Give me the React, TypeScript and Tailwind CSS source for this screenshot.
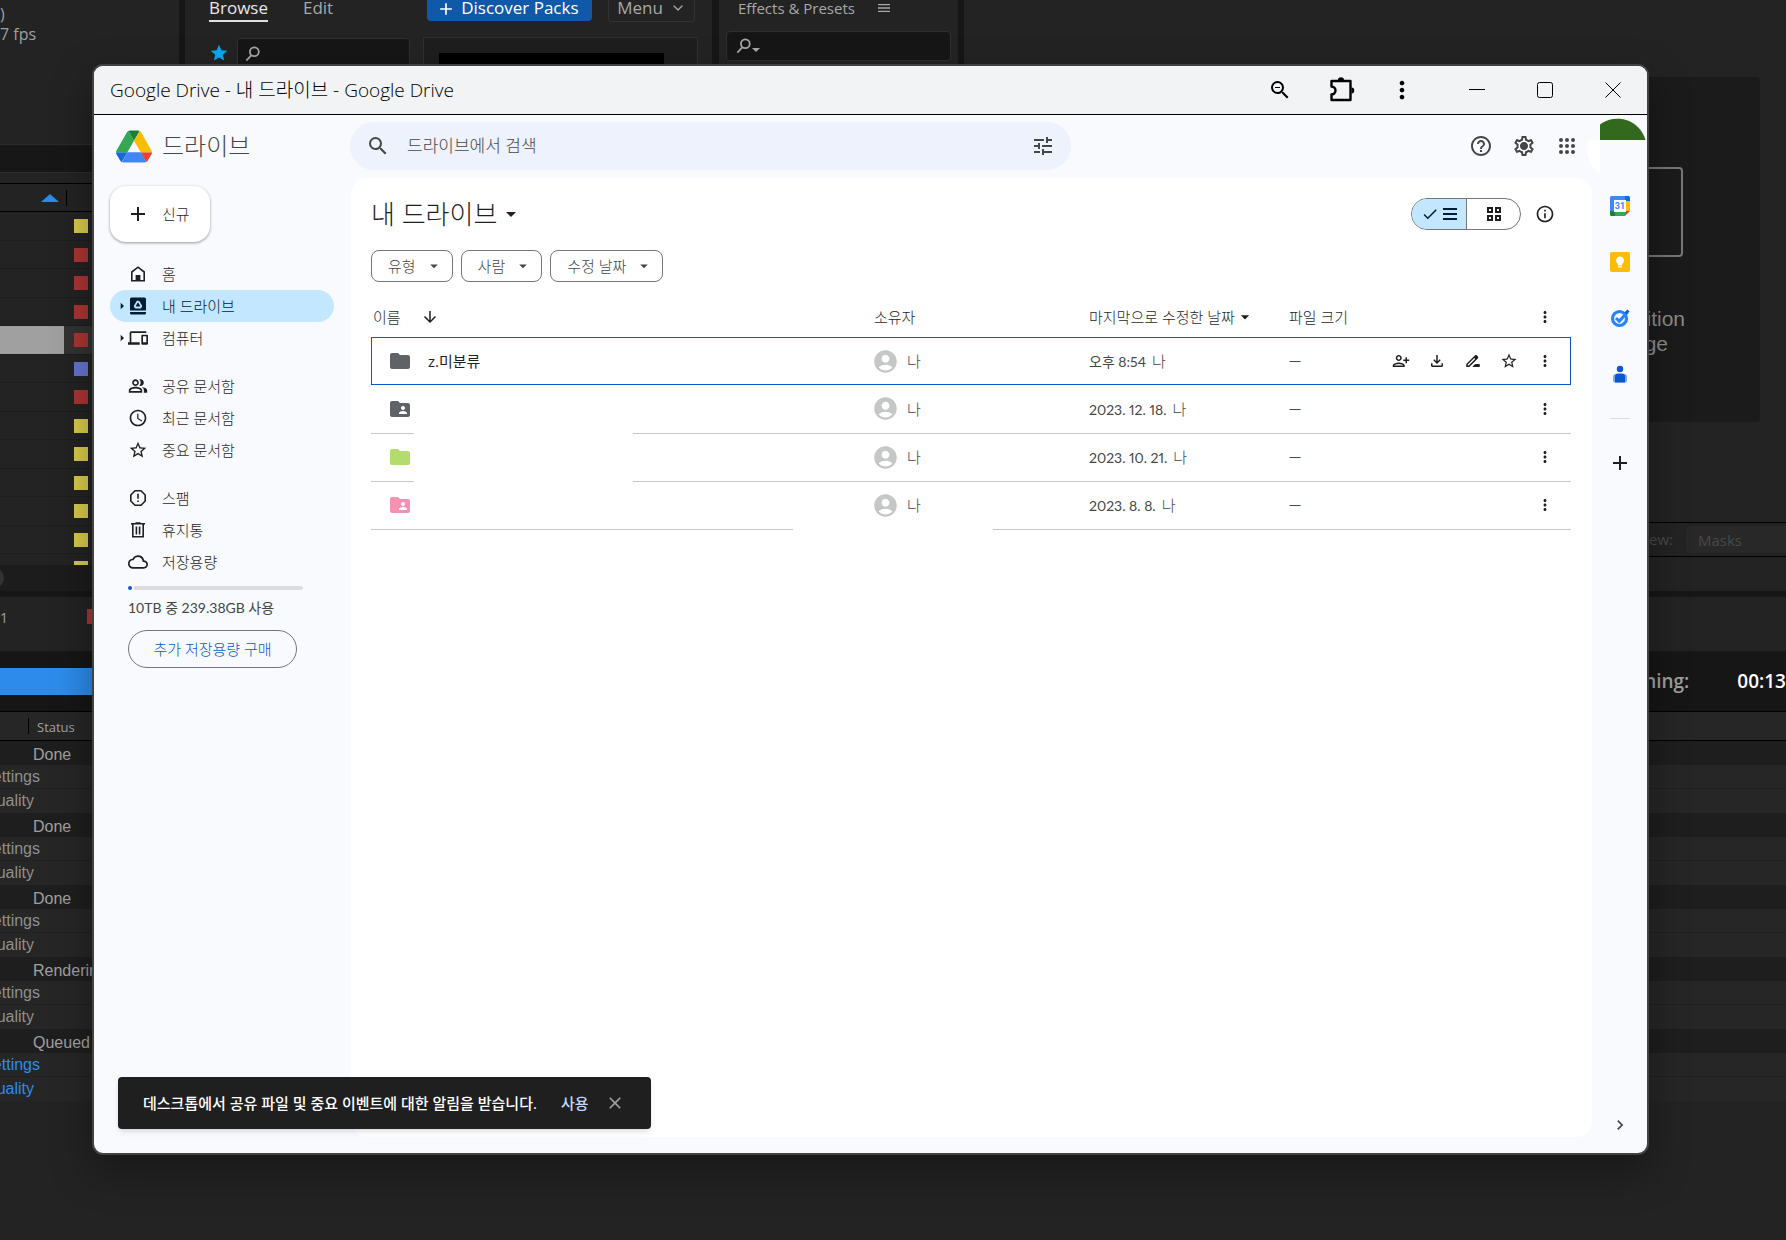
import React, {useState} from 'react';
import {
    MdAccountCircle,
    MdAdd,
    MdAccessTime,
    MdArrowDownward,
    MdArrowDropDown,
    MdArrowRight,
    MdCheck,
    MdChevronRight,
    MdClose,
    MdDriveFileRenameOutline,
    MdFolder,
    MdFolderShared,
    MdHelpOutline,
    MdMenu,
    MdMoreVert,
    MdOutlineCloud,
    MdOutlineDevices,
    MdOutlineFileDownload,
    MdOutlineInfo,
    MdOutlinePeopleAlt,
    MdOutlineSettings,
    MdPersonAddAlt,
    MdSearch,
    MdStar,
    MdStarOutline,
    MdTune,
    MdZoomOut,
} from 'react-icons/md';
import {LuChevronDown} from 'react-icons/lu';

type IconProps = {className?: string};

const HomeIcon = ({className}: IconProps) => (
    <svg viewBox="0 0 20 20" className={className} fill="none" stroke="currentColor" strokeWidth="1.6">
        <path d="M3.8 16.7V8L10 3.2 16.2 8v8.7z"/>
        <path d="M7.6 17v-6h4.8v6z" fill="currentColor" stroke="none"/>
    </svg>
);

const MyDriveIcon = ({className}: IconProps) => (
    <svg viewBox="0 0 20 20" className={className}>
        <path fill="currentColor" d="M3.5 1.5h13A1.5 1.5 0 0 1 18 3v11.500H2V3a1.5 1.5 0 0 1 1.5-1.5zM2 16h16v1a1.5 1.5 0 0 1-1.5 1.5h-13A1.5 1.5 0 0 1 2 17z"/>
        <path fill="none" stroke="#c2e7ff" strokeWidth="1.8" strokeLinejoin="round" d="M9.300 5.600h1.400l2.600 4.500-.8 1.400h-5l-.8-1.400z"/>
    </svg>
);

const SpamIcon = ({className}: IconProps) => (
    <svg viewBox="0 0 20 20" className={className} fill="none" stroke="currentColor" strokeWidth="1.6" strokeLinejoin="round">
        <path d="M7 2.800h6L17.200 7v6L13 17.200H7L2.800 13V7z"/>
        <path d="M10 5.800v5M10 12.400v1.700"/>
    </svg>
);

const TrashIcon = ({className}: IconProps) => (
    <svg viewBox="0 0 20 20" className={className} fill="none" stroke="currentColor" strokeWidth="1.6">
        <path d="M3 3.800h14M7.500 3h5M4.800 4v12.800h10.400V4M8.400 6.500v8M11.600 6.500v8"/>
    </svg>
);

const AppsIcon = ({className}: IconProps) => (
    <svg viewBox="0 0 24 24" className={className} fill="currentColor">
        {[6, 12, 18].map((y) => [6, 12, 18].map((x) => <circle key={`${x}-${y}`} cx={x} cy={y} r="2"/>))}
    </svg>
);

const SettingsIcon = ({className}: IconProps) => (
    <svg viewBox="0 0 24 24" className={className} fill="currentColor">
        <MdOutlineSettings size={24}/>
        <circle cx="12" cy="12" r="3.500"/>
    </svg>
);

const PuzzleIcon = ({className}: IconProps) => (
    <svg viewBox="0 0 28 28" className={className} fill="none" stroke="currentColor" strokeWidth="2.400" strokeLinejoin="round">
        <path d="M3.500 5h19v19h-19v-5.500a4 4 0 0 0 0-8z"/>
        <path d="M10 4a3 2.800 0 0 1 6 0zM23.500 11.500a2.800 3 0 0 1 0 6z" fill="currentColor" stroke="none"/>
    </svg>
);

const ListIcon = () => (
    <svg viewBox="0 0 14 14" className="size-[14px]" stroke="currentColor" strokeWidth="2">
        <path d="M0 2h14M0 7h14M0 12h14"/>
    </svg>
);

const GridIcon = () => (
    <svg viewBox="0 0 14 14" className="size-[14px]" fill="none" stroke="currentColor" strokeWidth="2">
        <path d="M1 1h4v4H1zM9 1h4v4H9zM1 9h4v4H1zM9 9h4v4H9z"/>
    </svg>
);

const DriveLogo = ({className}: IconProps) => (
    <svg viewBox="0 0 87.3 78" className={className}>
        <path d="m6.6 66.85 3.85 6.65c.8 1.4 1.95 2.5 3.3 3.3l13.75-23.8h-27.5c0 1.55.4 3.1 1.2 4.5z" fill="#1967d2"/>
        <path d="m43.65 25-13.75-23.8c-1.35.8-2.5 1.9-3.3 3.3l-25.4 44a9.06 9.06 0 0 0 -1.2 4.5h27.5z" fill="#34a853"/>
        <path d="m73.55 76.8c1.35-.8 2.5-1.9 3.3-3.3l1.6-2.75 7.65-13.25c.8-1.4 1.2-2.95 1.2-4.5h-27.502l5.852 11.5z" fill="#ea4335"/>
        <path d="m43.65 25 13.75-23.8c-1.35-.8-2.9-1.2-4.5-1.2h-18.5c-1.6 0-3.15.45-4.5 1.2z" fill="#188038"/>
        <path d="m59.8 53h-32.3l-13.75 23.8c1.35.8 2.9 1.2 4.5 1.2h50.8c1.6 0 3.15-.45 4.5-1.2z" fill="#4285f4"/>
        <path d="m73.4 26.5-12.7-22c-.8-1.4-1.95-2.5-3.3-3.3l-13.75 23.8 16.15 28h27.45c0-1.55-.4-3.1-1.2-4.5z" fill="#fbbc04"/>
    </svg>
);

const CalendarLogo = () => (
    <svg viewBox="0 0 20 20" className="size-5">
        <path fill="#4285f4" d="M1.5 0H15v5H5v10H0V1.500A1.500 1.500 0 0 1 1.500 0z"/>
        <path fill="#1967d2" d="M15 0h3.500A1.500 1.500 0 0 1 20 1.500V5h-5z"/>
        <path fill="#fbbc04" d="M15 5h5v10h-5z"/>
        <path fill="#34a853" d="M5 15h10v5H5z"/>
        <path fill="#188038" d="M0 15h5v5H1.500A1.500 1.500 0 0 1 0 18.500z"/>
        <path fill="#ea4335" d="M15 15h5l-5 5z"/>
        <path fill="#fff" d="M4 4h12v12H4z"/>
        <text x="10" y="13" textAnchor="middle" fontSize="9" fontWeight="700" fontFamily="Roboto" fill="#4285f4">31</text>
    </svg>
);

const KeepLogo = () => (
    <svg viewBox="0 0 20 20" className="size-5">
        <rect width="20" height="20" rx="2" fill="#fbbc04"/>
        <path fill="#fff" d="M10 4.500a4 4 0 0 0-2.200 7.300V13.500h4.400v-1.700A4 4 0 0 0 10 4.500zM8 14.300h4v1.300H8z"/>
    </svg>
);

const TasksLogo = () => (
    <svg viewBox="0 0 20 20" className="size-5" fill="none">
        <circle cx="9.500" cy="10.500" r="7" stroke="#2684fc" strokeWidth="3.200"/>
        <path d="M6 10l3.200 3.200L17.500 4" stroke="#2684fc" strokeWidth="3"/>
        <path d="M15.500 5.500l3-3" stroke="#0066da" strokeWidth="3"/>
    </svg>
);

const ContactsLogo = () => (
    <svg viewBox="0 0 20 20" className="size-5">
        <circle cx="10" cy="5" r="3.200" fill="#0b57d0"/>
        <path fill="#7baaf7" d="M6 10h8a3 3 0 0 1 3 3v3.500a2 2 0 0 1-2 2H5a2 2 0 0 1-2-2V13a3 3 0 0 1 3-3z"/>
        <path fill="#0b57d0" d="M8 9.500h4a3 3 0 0 1 3 3v6H5v-6a3 3 0 0 1 3-3z"/>
    </svg>
);

const MagnifierIcon = ({className}: IconProps) => (
    <svg viewBox="0 0 18 18" className={className} fill="none" stroke="currentColor" strokeWidth="2">
        <circle cx="10.500" cy="6.500" r="5"/>
        <path d="M7 10.500L1.500 16.500"/>
    </svg>
);

const navGroups = [
    [
        {label: '홈', icon: HomeIcon},
        {label: '내 드라이브', icon: MyDriveIcon, expandable: true},
        {label: '컴퓨터', icon: MdOutlineDevices, expandable: true},
    ],
    [
        {label: '공유 문서함', icon: MdOutlinePeopleAlt},
        {label: '최근 문서함', icon: MdAccessTime},
        {label: '중요 문서함', icon: MdStarOutline},
    ],
    [
        {label: '스팸', icon: SpamIcon},
        {label: '휴지통', icon: TrashIcon},
        {label: '저장용량', icon: MdOutlineCloud},
    ],
];

const files = [
    {name: 'z.미분류', shared: false, color: 'text-[#5f6368]', date: '오후 8:54'},
    {name: '', shared: true, color: 'text-[#5f6368]', date: '2023. 12. 18.'},
    {name: '', shared: false, color: 'text-[#b3dc6c]', date: '2023. 10. 21.'},
    {name: '', shared: true, color: 'text-[#f691b2]', date: '2023. 8. 8.'},
];

const swatches = [
    'bg-[#d8cb4a]', 'bg-[#ab3434]', 'bg-[#ab3434]', 'bg-[#ab3434]', 'bg-[#ab3434]', 'bg-[#6474cf]',
    'bg-[#ab3434]', 'bg-[#d8cb4a]', 'bg-[#d8cb4a]', 'bg-[#d8cb4a]', 'bg-[#d8cb4a]', 'bg-[#d8cb4a]', 'bg-[#d8cb4a]',
];

const queue = ['Done', 'Done', 'Done', 'Rendering', 'Queued'];

const ProjectPanel = () => (
    <div className="flex w-[179px] flex-col overflow-hidden">
        <div className="h-[144px] pt-1 text-[16px] leading-5 text-[#a0a0a0]">
            <div>)</div>
            <div>7 fps</div>
        </div>
        <div className="h-7 border-t border-[#2c2c2c] bg-[#171717]"/>
        <div className="h-[11px] border-t border-[#2c2c2c]"/>
        <div className="flex h-[29px] items-center border-y border-black pl-[41px]">
            <svg viewBox="0 0 18 8" className="h-2 w-[18px]"><path d="M0 8l9-8 9 8z" fill="#2d8ceb"/></svg>
            <div className="ml-[7px] h-4 w-px bg-black"/>
        </div>
        <div className="h-[353px] overflow-hidden">
            {swatches.map((color, i) => (
                <div key={i} className={`flex items-center border-b border-[#1d1d1d] ${i % 2 ? 'h-7' : 'h-[29px]'} ${i === 4 ? 'bg-[#323232]' : ''}`}>
                    <div className={`h-full w-16 ${i === 4 ? 'bg-[#a0a0a0]' : ''}`}/>
                    <div className={`ml-[10px] size-[14px] ${color}`}/>
                </div>
            ))}
        </div>
        <div className="flex h-[26px] items-center bg-[#1c1c1c]">
            <div className="-ml-4 size-5 rounded-full bg-[#333333]"/>
        </div>
    </div>
);

const BrowsePanel = () => (
    <div className="w-[527px] overflow-hidden pl-6">
        <div className="flex h-[22px] items-start text-[17px] leading-4 text-[#a8a8a8]">
            <div className="h-[22px] border-b-2 border-[#e0e0e0] text-[#e8e8e8]">Browse</div>
            <div className="ml-[35px]">Edit</div>
            <button className="ml-[94px] flex h-[21px] w-[165px] rounded-b bg-[#1059a9] pl-[9px] text-[17px] text-white">
                <MdAdd className="-mt-px mr-[5px] size-5"/>Discover Packs
            </button>
            <button className="ml-4 flex h-[22px] w-[87px] justify-between rounded-b border border-t-0 border-[#333333] px-2">
                Menu<LuChevronDown className="size-4"/>
            </button>
        </div>
        <div className="mt-4 flex items-start">
            <MdStar className="mt-[5px] size-5 text-[#06a9f4]"/>
            <div className="ml-2 flex h-8 w-[173px] rounded border border-[#303030] bg-[#161616] p-[7px]">
                <MagnifierIcon className="size-4 text-[#a8a8a8]"/>
            </div>
            <div className="-mt-px ml-[13px] h-10 w-[275px] border border-[#303030] bg-[#1e1e1e] px-[15px] pt-[15px]">
                <div className="h-6 w-[225px] bg-black"/>
            </div>
        </div>
    </div>
);

const EffectsPanel = () => (
    <div className="w-[239px] overflow-hidden px-[7px]">
        <div className="flex h-[31px] pl-3 text-[15px] leading-4 text-[#a8a8a8]">
            <span>Effects &amp; Presets</span>
            <MdMenu className="ml-[21px] size-4"/>
        </div>
        <div className="flex h-[30px] items-center rounded border border-[#303030] bg-[#161616] pl-[9px] text-[#a8a8a8]">
            <MagnifierIcon className="size-4"/>
            <svg viewBox="0 0 8 4" className="mt-2 h-1 w-2"><path d="M0 0h8L4 4z" fill="currentColor"/></svg>
        </div>
    </div>
);

const CompositionPanel = () => (
    <div className="flex min-w-0 flex-1 flex-col">
        <div className="mt-[77px] mr-[26px] flex h-[345px] flex-col items-end rounded bg-[#1b1b1b] pr-[77px] font-['Liberation_Sans'] text-[21px] leading-[25px] text-[#8d8d8d]">
            <div className="mt-[90px] h-[90px] w-[140px] rounded border-2 border-[#777777]"/>
            <div className="mt-[49px] -mr-[2px]">New Composition</div>
            <div className="mr-[15px]">From Footage</div>
        </div>
        <div className="mt-[100px] flex h-[35px] items-center justify-end border-y border-black text-[15px] text-[#484848]">
            <span>View:</span>
            <div className="ml-[13px] h-[27px] w-[100px] rounded-l bg-[#282828] pl-3 leading-[28px]">Masks</div>
        </div>
    </div>
);

const RenderQueue = () => (
    <div className="overflow-hidden">
        <div className="flex h-[54px] items-start pt-3">
            <span className="w-[87px] pt-px text-[14px] leading-4 text-[#a0a0a0]">1</span>
            <div className="h-[15px] w-5 bg-[#ab3434]"/>
        </div>
        <div className="flex h-[60px] items-center bg-[#161616]">
            <div className="h-[27px] w-2/5 bg-[#2d8ceb]"/>
            <div className="ml-auto flex text-[19px] font-semibold">
                <span className="text-[#a0a0a0]">Est. Remaining:</span>
                <span className="ml-12 text-white">00:13</span>
            </div>
        </div>
        <div className="flex h-[30px] items-center border-y border-black bg-[#262626]">
            <div className="ml-7 h-4 w-px bg-black"/>
            <span className="ml-2 pt-1 text-[13px] text-[#a0a0a0]">Status</span>
        </div>
        {queue.map((status, i) => {
            const tone = i === 4 ? 'text-[#2d8ceb]' : 'text-[#8f8f8f]';
            return (
                <div key={i} className={`font-['Liberation_Sans'] text-[16px] leading-6 ${tone}`}>
                    <div className="h-6 bg-[#1e1e1e] pt-[2px] pl-[33px] text-[#a0a0a0]">{status}</div>
                    <div className="h-6 border-b border-[#202020] bg-[#262626]">
                        <div className="flex w-10 justify-end overflow-hidden">ettings</div>
                    </div>
                    <div className="h-6 bg-[#262626]">
                        <div className="flex w-[34px] justify-end overflow-hidden">uality</div>
                    </div>
                </div>
            );
        })}
    </div>
);

const TitleBar = () => (
    <div className="flex h-[49px] shrink-0 items-center border-b border-black bg-[#f1f3f4] pl-4 text-black">
        <h1 className="text-[19px] font-light">Google Drive - 내 드라이브 - Google Drive</h1>
        <div className="ml-auto flex items-center">
            <button aria-label="축소" className="flex w-[62px] justify-center"><MdZoomOut className="size-6"/></button>
            <button aria-label="확장 프로그램" className="flex w-[62px] justify-center"><PuzzleIcon className="size-7"/></button>
            <button aria-label="더보기" className="flex w-[58px] justify-center"><MdMoreVert className="size-7"/></button>
            <button aria-label="최소화" className="ml-3 flex w-[68px] justify-center">
                <svg viewBox="0 0 16 16" className="size-4" stroke="currentColor"><path d="M0 7.500h16"/></svg>
            </button>
            <button aria-label="최대화" className="flex w-[68px] justify-center">
                <svg viewBox="0 0 16 16" className="size-4" fill="none" stroke="currentColor"><rect x=".5" y=".5" width="15" height="15" rx="2"/></svg>
            </button>
            <button aria-label="닫기" className="flex w-[68px] justify-center">
                <svg viewBox="0 0 16 16" className="size-4" stroke="currentColor"><path d="M.5.5l15 15M15.500.5l-15 15"/></svg>
            </button>
        </div>
    </div>
);

const SideNav = ({active, onSelect}: {active: string; onSelect: (label: string) => void}) => (
    <aside className="w-[257px] shrink-0 pt-2 pl-4">
        <button className="flex h-14 w-[100px] items-center rounded-2xl bg-white pl-4 shadow-[0_1px_3px_rgba(0,0,0,0.4)]">
            <MdAdd className="size-6"/>
            <span className="ml-3">신규</span>
        </button>
        <nav className="mt-4 flex flex-col gap-4">
            {navGroups.map((group, i) => (
                <ul key={i}>
                    {group.map((item) => {
                        const Icon = item.icon;
                        return (
                            <li key={item.label}>
                                <button
                                    onClick={() => onSelect(item.label)}
                                    className={`flex h-8 w-56 items-center rounded-full pl-1 ${active === item.label ? 'bg-[#c2e7ff] text-[#001d35]' : ''}`}
                                >
                                    <span className="w-[14px]">{item.expandable && <MdArrowRight className="size-4"/>}</span>
                                    <Icon className="size-5"/>
                                    <span className="ml-[14px]">{item.label}</span>
                                </button>
                            </li>
                        );
                    })}
                </ul>
            ))}
        </nav>
        <div className="mt-2 ml-[18px] w-[175px]">
            <div className="flex h-1 gap-[2px]">
                <div className="w-1 rounded-full bg-[#0b57d0]"/>
                <div className="flex-1 rounded-r bg-[#dadce0]"/>
            </div>
            <p className="mt-2 font-[Lato,'Noto_Sans_CJK_KR',sans-serif] text-[14px] leading-5 font-normal text-[#444746]">10TB 중 239.38GB 사용</p>
            <button className="mt-3 h-[38px] w-[169px] rounded-full border border-[#747775] text-[#0b57d0]">추가 저장용량 구매</button>
        </div>
    </aside>
);

const Chip = ({label}: {label: string}) => (
    <button className="flex h-8 items-center rounded-lg border border-[#747775] pr-[9px] pl-4 text-[#444746]">
        {label}<MdArrowDropDown className="ml-[9px] size-[18px]"/>
    </button>
);

const FileTable = () => (
    <div className="relative mt-[15px]">
        <table className="w-full table-fixed border-collapse text-left">
            <thead>
                <tr className="h-10 border-b border-[#c7c7c7]">
                    <th className="font-light"><span className="flex items-center pl-[2px]">이름<MdArrowDownward className="ml-5 size-[18px]"/></span></th>
                    <th className="w-[215px] font-light">소유자</th>
                    <th className="w-[200px] font-light"><span className="flex items-center">마지막으로 수정한 날짜<MdArrowDropDown className="size-5"/></span></th>
                    <th className="w-[90px] font-light">파일 크기</th>
                    <th className="w-[192px] font-light"><button aria-label="더보기" className="ml-auto flex w-[52px] justify-center"><MdMoreVert className="size-[18px]"/></button></th>
                </tr>
            </thead>
            <tbody className="text-[#444746]">
                {files.map((file, i) => {
                    const Folder = file.shared ? MdFolderShared : MdFolder;
                    return (
                        <tr key={i} className={`h-12 ${i === 0 ? 'outline -outline-offset-1 outline-[#0b57d0]' : 'border-b border-[#c7c7c7]'}`}>
                            <td>
                                <span className="flex items-center pl-[17px]">
                                    <Folder className={`size-6 ${file.color}`}/>
                                    <span className="ml-4 font-normal text-[#1f1f1f]">{file.name}</span>
                                </span>
                            </td>
                            <td>
                                <span className="flex items-center"><MdAccountCircle className="-ml-[2px] size-[27px] text-[#c4c7c5]"/><span className="ml-2">나</span></span>
                            </td>
                            <td className="font-[Lato,'Noto_Sans_CJK_KR',sans-serif] text-[14px] font-normal proportional-nums">
                                {file.date}<span className="ml-[6px] text-[15px] font-light">나</span>
                            </td>
                            <td className="text-[12px] font-normal">—</td>
                            <td>
                                <div className="flex items-center justify-end text-[#1f1f1f]">
                                    {i === 0 && (
                                        <>
                                            <button aria-label="공유" className="flex w-9 justify-center"><MdPersonAddAlt className="size-[18px]"/></button>
                                            <button aria-label="다운로드" className="flex w-9 justify-center"><MdOutlineFileDownload className="size-[18px]"/></button>
                                            <button aria-label="이름 바꾸기" className="flex w-9 justify-center"><MdDriveFileRenameOutline className="size-[18px]"/></button>
                                            <button aria-label="중요" className="flex w-9 justify-center"><MdStarOutline className="size-[18px]"/></button>
                                        </>
                                    )}
                                    <button aria-label="더보기" className="mr-2 flex w-9 justify-center"><MdMoreVert className="size-[18px]"/></button>
                                </div>
                            </td>
                        </tr>
                    );
                })}
            </tbody>
        </table>
        {/* Blank areas over the row lines */}
        <div className="absolute top-32 left-[43px] h-16 w-[219px] bg-white"/>
        <div className="absolute top-[228px] left-[422px] h-3 w-[200px] bg-white"/>
    </div>
);

const SideRail = () => (
    <div className="flex w-[55px] shrink-0 flex-col items-center pt-[18px] pb-[18px]">
        <div className="flex flex-col gap-9">
            <button aria-label="Calendar"><CalendarLogo/></button>
            <button aria-label="Keep"><KeepLogo/></button>
            <button aria-label="Tasks"><TasksLogo/></button>
            <button aria-label="주소록"><ContactsLogo/></button>
        </div>
        <div className="mt-[34px] h-px w-5 bg-[#dadce0]"/>
        <button aria-label="부가기능" className="mt-8"><MdAdd className="size-6"/></button>
        <button aria-label="측면 패널 숨기기" className="mt-auto"><MdChevronRight className="size-5 text-[#444746]"/></button>
    </div>
);

const App = () => {
    const [active, setActive] = useState('내 드라이브');
    const [toast, setToast] = useState(true);

    return (
        <div className="relative min-h-screen overflow-hidden bg-[#232323] font-['Open_Sans','Noto_Sans_CJK_KR',sans-serif]">
            <div className="flex h-[591px]">
                <ProjectPanel/>
                <div className="w-[6px] bg-[#161616]"/>
                <BrowsePanel/>
                <div className="w-[7px] bg-[#161616]"/>
                <EffectsPanel/>
                <div className="w-[6px] bg-[#161616]"/>
                <CompositionPanel/>
            </div>
            <div className="h-[6px] bg-[#161616]"/>
            <RenderQueue/>

            <div className="absolute top-16 right-[137px] bottom-[85px] left-[92px] flex flex-col overflow-hidden rounded-[11px] border-2 border-[#424242] bg-[#f8fafd] text-[15px] font-light text-[#1f1f1f] shadow-[0_16px_40px_rgba(0,0,0,0.35)]">
                <TitleBar/>
                <header className="flex h-[63px] shrink-0 items-center pb-px">
                    <div className="flex w-[256px] items-center pl-[22px] text-[24px] text-[#444746]">
                        <DriveLogo className="h-[33px] w-9"/>
                        <span className="ml-[10px]">드라이브</span>
                    </div>
                    <label className="flex h-12 w-[721px] items-center rounded-full bg-[#edf2fc] pr-4 pl-4 text-[#444746]">
                        <MdSearch className="size-6"/>
                        <input aria-label="드라이브에서 검색" placeholder="드라이브에서 검색" className="ml-[17px] min-w-0 flex-1 bg-transparent text-[17px] outline-none placeholder:text-[#444746]"/>
                        <MdTune className="size-6"/>
                    </label>
                    <div className="ml-auto flex items-center gap-[19px] text-[#444746]">
                        <button aria-label="지원"><MdHelpOutline className="size-6"/></button>
                        <button aria-label="설정"><SettingsIcon className="size-6"/></button>
                        <button aria-label="Google 앱"><AppsIcon className="size-6"/></button>
                    </div>
                    <svg viewBox="0 0 60 62" className="ml-2 h-[62px] w-[60px]">
                        <path d="M13 9.500A29.200 29.200 0 0 1 58.500 25H13z" fill="#33691e"/>
                        <path d="M1 25A30 30 0 0 0 13 58V25z" fill="#fff"/>
                    </svg>
                </header>
                <div className="flex min-h-0 flex-1">
                    <SideNav active={active} onSelect={setActive}/>
                    <main className="mb-4 min-w-0 flex-1 rounded-2xl bg-white pr-[21px] pl-5">
                        <div className="flex h-[72px] items-center">
                            <button className="flex items-center text-[26px]">내 드라이브<MdArrowDropDown className="ml-[2px] size-6"/></button>
                            <div className="ml-auto flex h-8 w-[110px] overflow-hidden rounded-full border border-[#747775]">
                                <button aria-label="목록 레이아웃" className="flex w-[55px] items-center justify-center gap-1 border-r border-[#747775] bg-[#c2e7ff] text-[#001d35]">
                                    <MdCheck className="size-[18px]"/><ListIcon/>
                                </button>
                                <button aria-label="그리드 레이아웃" className="flex flex-1 items-center justify-center"><GridIcon/></button>
                            </div>
                            <button aria-label="세부정보" className="mr-4 ml-[14px]"><MdOutlineInfo className="size-5"/></button>
                        </div>
                        <div className="flex gap-2">
                            <Chip label="유형"/>
                            <Chip label="사람"/>
                            <Chip label="수정 날짜"/>
                        </div>
                        <FileTable/>
                    </main>
                    <SideRail/>
                </div>

                {toast && (
                    <div className="absolute bottom-6 left-6 flex h-[52px] w-[533px] items-center rounded-sm bg-[#1f1f1f] pl-[25px] text-[15px] font-medium text-white shadow-md">
                        <span className="whitespace-nowrap">데스크톱에서 공유 파일 및 중요 이벤트에 대한 알림을 받습니다.</span>
                        <button className="ml-6 text-[#c2d7fb]">사용</button>
                        <button aria-label="닫기" onClick={() => setToast(false)} className="ml-4 text-[#9e9e9e]"><MdClose className="size-5"/></button>
                    </div>
                )}
            </div>
        </div>
    );
};

export default App;
